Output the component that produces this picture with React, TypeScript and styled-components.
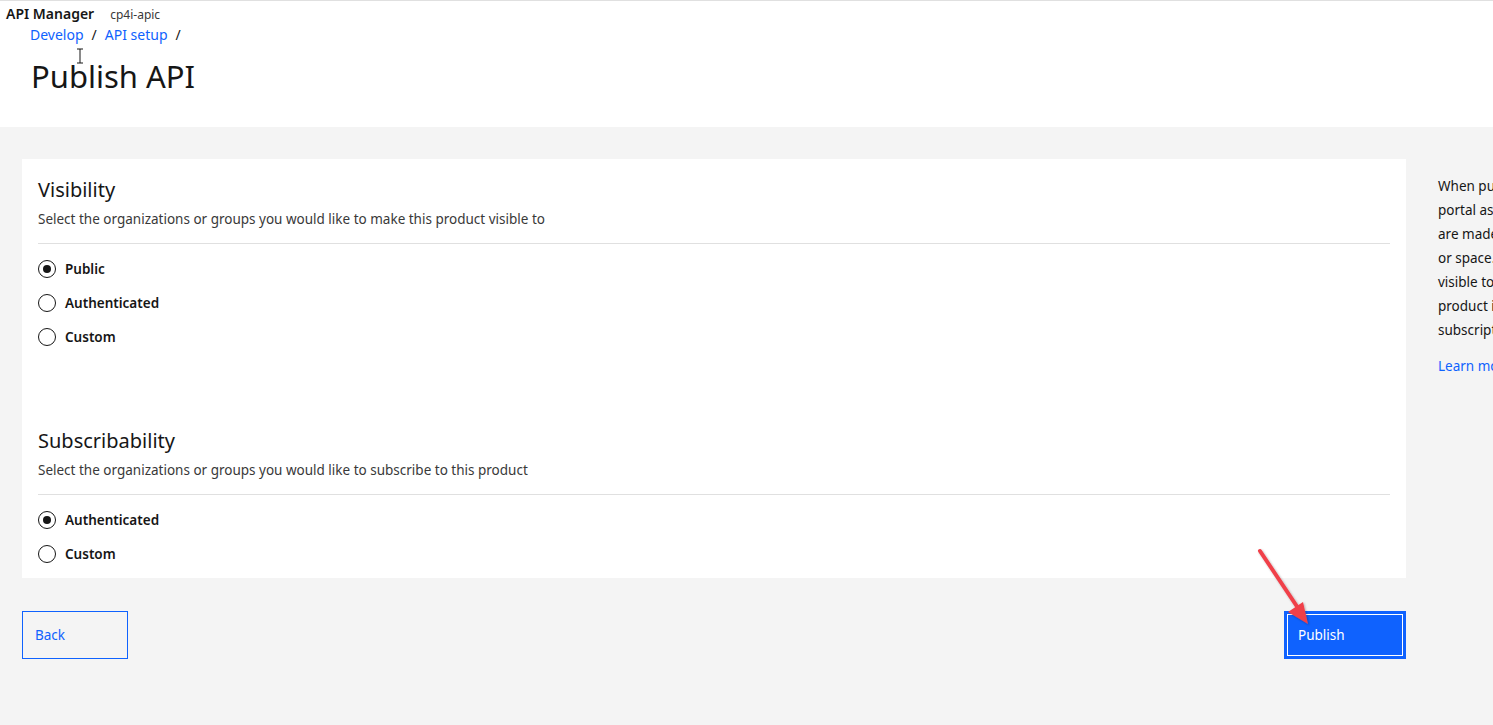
import React from "react"
import styled, { createGlobalStyle } from "styled-components"

const GlobalStyle = createGlobalStyle`
  html, body {
    margin: 0;
    padding: 0;
    background: #f4f4f4;
    overflow: hidden;
  }
  body {
    font-family: "Noto Sans", "Open Sans", Arial, sans-serif;
    color: #161616;
  }
`

const visibilityOptions = [
  { label: "Public", checked: true },
  { label: "Authenticated", checked: false },
  { label: "Custom", checked: false },
]

const subscribeOptions = [
  { label: "Authenticated", checked: true },
  { label: "Custom", checked: false },
]

const sideLines = [
  "When publishing the product,",
  "portal as defined by the",
  "are made available in the catalog",
  "or space. Products that are",
  "visible to a consumer make the",
  "product its APIs available for",
  "subscription.",
]

const App: React.FC = () => {
  return (
    <Page>
      <GlobalStyle />
      <Header>
        <TopBar>
          <Product>API Manager</Product>
          <Instance>cp4i-apic</Instance>
        </TopBar>
        <Breadcrumb>
          <Crumb>Develop</Crumb>
          <Slash>/</Slash>
          <Crumb>API setup</Crumb>
          <Slash>/</Slash>
        </Breadcrumb>
        <PageTitle>Publish API</PageTitle>
        <Cursor width="8" height="16" viewBox="0 0 8 16">
          <path d="M1 1h6M4 1v14M1 15h6" stroke="#161616" strokeWidth="1" fill="none" />
        </Cursor>
      </Header>

      <Main>
        <Column>
          <Card>
            <Section>
              <SectionTitle>Visibility</SectionTitle>
              <SectionText>
                Select the organizations or groups you would like to make this product visible to
              </SectionText>
              <Divider />
              <RadioList>
                {visibilityOptions.map(o => (
                  <RadioRow key={o.label}>
                    <RadioCircle checked={o.checked} />
                    <RadioLabel>{o.label}</RadioLabel>
                  </RadioRow>
                ))}
              </RadioList>
            </Section>
            <Section last>
              <SectionTitle>Subscribability</SectionTitle>
              <SectionText>
                Select the organizations or groups you would like to subscribe to this product
              </SectionText>
              <Divider />
              <RadioList>
                {subscribeOptions.map(o => (
                  <RadioRow key={o.label}>
                    <RadioCircle checked={o.checked} />
                    <RadioLabel>{o.label}</RadioLabel>
                  </RadioRow>
                ))}
              </RadioList>
            </Section>
          </Card>

          <Actions>
            <BackButton>Back</BackButton>
            <PublishWrap>
              <PublishButton>Publish</PublishButton>
              <Arrow width="70" height="90" viewBox="0 0 70 90">
                <defs>
                  <filter id="shadow" x="-20%" y="-20%" width="140%" height="140%">
                    <feDropShadow dx="1" dy="1" stdDeviation="1" floodColor="#000" floodOpacity="0.3" />
                  </filter>
                </defs>
                <g filter="url(#shadow)">
                  <line x1="4" y1="3" x2="42" y2="60" stroke="#f0404a" strokeWidth="4" strokeLinecap="round" />
                  <polygon points="52,76 32,64 47,54" fill="#f0404a" />
                </g>
              </Arrow>
            </PublishWrap>
          </Actions>
        </Column>

        <Side>
          <SideText>
            {sideLines.map(l => (
              <SideLine key={l}>{l}</SideLine>
            ))}
          </SideText>
          <LearnMore>Learn more</LearnMore>
        </Side>
      </Main>
    </Page>
  )
}

const Page = styled.div`
  width: 1493px;
  height: 725px;
  overflow: hidden;
  background: #f4f4f4;
`

const Header = styled.header`
  position: relative;
  height: 127px;
  background: #ffffff;
  border-top: 1px solid #e0e0e0;
  box-sizing: border-box;
  padding: 3px 0 0 6px;
`

const TopBar = styled.div`
  display: flex;
  align-items: baseline;
  gap: 16px;
  height: 20px;
`

const Product = styled.span`
  font-size: 14px;
  font-weight: 600;
  color: #161616;
`

const Instance = styled.span`
  font-size: 12px;
  color: #393939;
`

const Breadcrumb = styled.nav`
  display: flex;
  align-items: center;
  gap: 8px;
  margin: 0 0 0 24px;
  height: 20px;
  font-size: 14px;
`

const Crumb = styled.a`
  color: #0f62fe;
  cursor: pointer;
`

const Slash = styled.span`
  color: #161616;
`

const PageTitle = styled.h1`
  margin: 12px 0 0 25px;
  font-size: 31px;
  line-height: 40px;
  font-weight: 400;
  color: #161616;
`

const Cursor = styled.svg`
  position: absolute;
  left: 76px;
  top: 47px;
`

const Main = styled.main`
  display: grid;
  grid-template-columns: 1384px 320px;
  padding: 32px 0 0 22px;
`

const Column = styled.div`
  display: flex;
  flex-direction: column;
`

const Card = styled.section`
  background: #ffffff;
  padding: 17px 16px 0 16px;
  height: 419px;
  box-sizing: border-box;
`

const Section = styled.div<{ last?: boolean }>`
  display: flex;
  flex-direction: column;
  margin-bottom: ${p => (p.last ? "0" : "80px")};
`

const SectionTitle = styled.h2`
  margin: 0;
  font-size: 20px;
  line-height: 28px;
  font-weight: 400;
  color: #161616;
`

const SectionText = styled.p`
  margin: 5px 0 0 0;
  font-size: 13.5px;
  line-height: 20px;
  color: #393939;
`

const Divider = styled.hr`
  margin: 14px 0 0 0;
  border: none;
  border-top: 1px solid #e0e0e0;
`

const RadioList = styled.div`
  display: flex;
  flex-direction: column;
  gap: 14px;
  margin-top: 15px;
`

const RadioRow = styled.label`
  display: flex;
  align-items: center;
  gap: 9px;
  height: 20px;
  cursor: pointer;
`

const RadioCircle = styled.span<{ checked: boolean }>`
  position: relative;
  width: 18px;
  height: 18px;
  box-sizing: border-box;
  border: 1px solid #161616;
  border-radius: 50%;
  flex-shrink: 0;
  &::after {
    content: "";
    display: ${p => (p.checked ? "block" : "none")};
    position: absolute;
    left: 4px;
    top: 4px;
    width: 8px;
    height: 8px;
    border-radius: 50%;
    background: #161616;
  }
`

const RadioLabel = styled.span`
  font-size: 13.5px;
  font-weight: 600;
  color: #161616;
`

const Actions = styled.div`
  display: flex;
  justify-content: space-between;
  margin-top: 33px;
`

const BackButton = styled.button`
  width: 106px;
  height: 48px;
  box-sizing: border-box;
  border: 1px solid #0f62fe;
  background: transparent;
  color: #0f62fe;
  font-family: inherit;
  font-size: 13.5px;
  text-align: left;
  padding: 0 12px;
  cursor: pointer;
`

const PublishWrap = styled.div`
  position: relative;
`

const PublishButton = styled.button`
  width: 122px;
  height: 48px;
  box-sizing: border-box;
  border: 2px solid #0f62fe;
  background: #0f62fe;
  box-shadow: inset 0 0 0 1px #0f62fe, inset 0 0 0 2px #ffffff;
  color: #ffffff;
  font-family: inherit;
  font-size: 13.5px;
  text-align: left;
  padding: 0 12px;
  cursor: pointer;
`

const Arrow = styled.svg`
  position: absolute;
  left: -28px;
  top: -63px;
  pointer-events: none;
`

const Side = styled.aside`
  padding: 15px 0 0 32px;
`

const SideText = styled.div`
  font-size: 13.5px;
  line-height: 24px;
  color: #161616;
`

const SideLine = styled.div`
  white-space: nowrap;
`

const LearnMore = styled.a`
  display: block;
  margin-top: 12px;
  font-size: 13.5px;
  line-height: 24px;
  color: #0f62fe;
`

export default App
